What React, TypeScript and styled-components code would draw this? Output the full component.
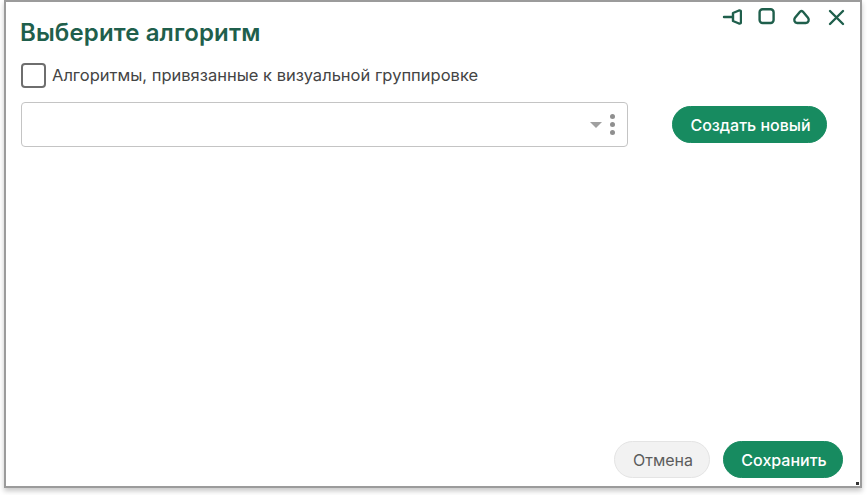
import React from 'react';
import styled, { createGlobalStyle } from 'styled-components';

const GlobalStyle = createGlobalStyle`
  html, body {
    margin: 0;
    padding: 0;
    background: #fff;
    overflow: hidden;
  }
  body {
    font-family: Inter, "Noto Sans", "Liberation Sans", sans-serif;
  }
`;

const Page = styled.div`
  width: 867px;
  height: 495px;
  padding: 0 4px 0 4px;
  box-sizing: border-box;
`;

const Dialog = styled.div`
  position: relative;
  width: 858px;
  height: 488px;
  box-sizing: border-box;
  border: 2px solid #9b9b9b;
  background: #fff;
  box-shadow: 0 3px 5px rgba(0, 0, 0, 0.22);
  display: flex;
  flex-direction: column;
  padding: 0 15px 8px 14px;
`;

const Header = styled.div`
  display: flex;
  justify-content: space-between;
  align-items: flex-start;
  height: 44px;
`;

const Title = styled.h1`
  margin: 17px 0 0;
  font-size: 24px;
  line-height: 28px;
  font-weight: 600;
  letter-spacing: 0.12px;
  color: #1f5f4c;
`;

const WindowIcons = styled.div`
  display: flex;
  gap: 15px;
  margin: 5px -2px 0 0;
`;

const CheckRow = styled.label`
  display: flex;
  align-items: center;
  gap: 6px;
  margin: 16px 0 0 1px;
  height: 26px;
`;

const CheckBox = styled.span`
  width: 25px;
  height: 25px;
  box-sizing: border-box;
  border: 2px solid #6e6e6e;
  border-radius: 4px;
`;

const CheckLabel = styled.span`
  font-size: 16.5px;
  color: #444;
`;

const SelectRow = styled.div`
  display: flex;
  align-items: center;
  margin: 14px 0 0 1px;
`;

const Select = styled.div`
  width: 607px;
  height: 45px;
  box-sizing: border-box;
  border: 1px solid #c4c4c4;
  border-radius: 4px;
  display: flex;
  align-items: center;
  justify-content: flex-end;
  gap: 7px;
  padding-right: 12px;
`;

const Arrow = styled.span`
  width: 0;
  height: 0;
  margin-right: 1px;
  border-left: 6px solid transparent;
  border-right: 6px solid transparent;
  border-top: 6px solid #a0a0a0;
`;

const Dots = styled.span`
  display: flex;
  flex-direction: column;
  gap: 3px;
`;

const Dot = styled.span`
  width: 5px;
  height: 5px;
  border-radius: 50%;
  background: #8f8f8f;
`;

const Button = styled.button<{ $secondary?: boolean }>`
  height: 37px;
  width: ${p => (p.$secondary ? 96 : 120)}px;
  padding: 0 0 0 2px;
  box-sizing: border-box;
  border-radius: 19px;
  border: 1px solid ${p => (p.$secondary ? '#e4e4e4' : '#178b60')};
  background: ${p => (p.$secondary ? '#f2f2f2' : '#178b60')};
  color: ${p => (p.$secondary ? '#5c5c5c' : '#fff')};
  font-family: inherit;
  font-size: 16px;
  font-weight: ${p => (p.$secondary ? 400 : 500)};
`;

const CreateButton = styled(Button)`
  width: 155px;
  margin-left: 44px;
`;

const Footer = styled.div`
  margin-top: auto;
  display: flex;
  justify-content: flex-end;
  gap: 13px;
  padding-right: 2px;
`;

const Grip = styled.span`
  position: absolute;
  right: 1px;
  bottom: 1px;
  width: 3px;
  height: 3px;
  background: #333;
`;

const iconProps = {
  width: 20,
  height: 20,
  viewBox: '0 0 20 20',
  fill: 'none',
  stroke: '#1f5f4c',
  strokeWidth: 2.4,
  strokeLinecap: 'round' as const,
  strokeLinejoin: 'round' as const,
};

export default function App() {
  return (
    <>
      <GlobalStyle />
      <Page>
        <Dialog>
          <Header>
            <Title>Выберите алгоритм</Title>
            <WindowIcons>
              <svg {...iconProps}>
                <path d="M2 10h9M11 6L17 3.5Q19 3 19 5V15Q19 17 17 16.5L11 14Z" />
              </svg>
              <svg {...iconProps}>
                <rect x="2.6" y="2.2" width="14" height="13.8" rx="3" />
              </svg>
              <svg {...iconProps}>
                <path d="M8.2 4.6a2 2 0 0 1 2.6 0l5.2 6.2c1.5 2 .6 5.2-2.2 5.2H5.2c-2.8 0-3.7-3.2-2.2-5.2z" />
              </svg>
              <svg {...iconProps}>
                <path d="M3 4l13 13M16 4L3 17" />
              </svg>
            </WindowIcons>
          </Header>
          <CheckRow>
            <CheckBox />
            <CheckLabel>Алгоритмы, привязанные к визуальной группировке</CheckLabel>
          </CheckRow>
          <SelectRow>
            <Select>
              <Arrow />
              <Dots>
                <Dot />
                <Dot />
                <Dot />
              </Dots>
            </Select>
            <CreateButton>Создать новый</CreateButton>
          </SelectRow>
          <Footer>
            <Button $secondary>Отмена</Button>
            <Button>Сохранить</Button>
          </Footer>
          <Grip />
        </Dialog>
      </Page>
    </>
  );
}
